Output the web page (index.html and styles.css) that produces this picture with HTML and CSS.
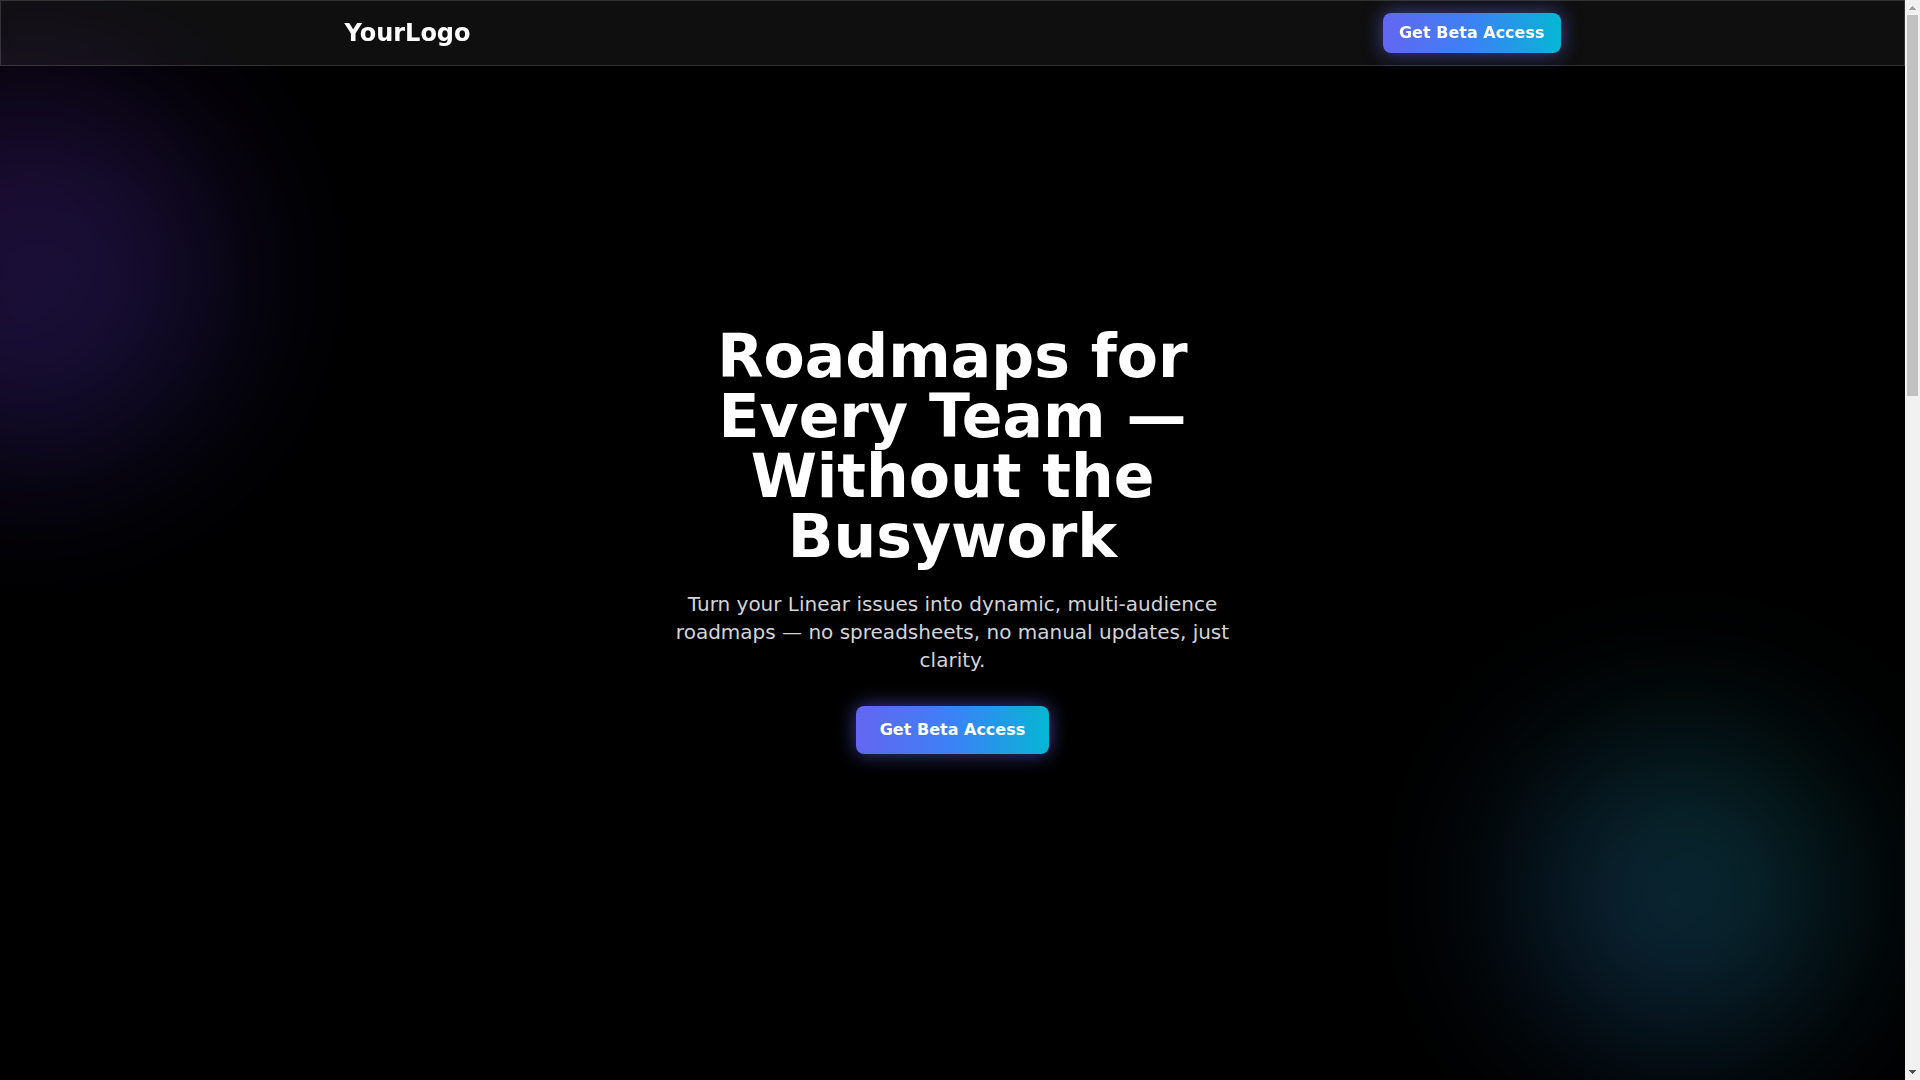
FILE: index.html
```html
<!DOCTYPE html>
<html lang="en">
<head>
  <meta charset="UTF-8" />
  <meta name="viewport" content="width=device-width, initial-scale=1.0"/>
  <title>YourLogo</title>
  <link rel="stylesheet" href="styles.css">
</head>
<body>
  <div class="page">
    <nav class="navbar">
      <div class="container">
        <a class="logo" href="#">YourLogo</a>
        <button class="btn">Get Beta Access</button>
      </div>
    </nav>

    <main class="hero">
      <div class="glow glow-left"></div>
      <div class="glow glow-right"></div>
      <div class="hero-content">
        <h1>Roadmaps for Every Team — Without the Busywork</h1>
        <p>Turn your Linear issues into dynamic, multi-audience roadmaps — no spreadsheets, no manual updates, just clarity.</p>
        <button class="btn btn-large">Get Beta Access</button>
      </div>
    </main>
  </div>

  <div class="scrollbar" aria-hidden="true">
    <svg class="arrow" viewBox="0 0 15 15" fill="#a0a0a0"><path d="M7 6h1v1h1v1h1v1h1v1H4V9h1V8h1V7h1z"/></svg>
    <div class="track"><div class="thumb"></div></div>
    <svg class="arrow" viewBox="0 0 15 15" fill="#505050"><path d="M4 5h7v1h-1v1H9v1H8v1H7V8H6V7H5V6H4z"/></svg>
  </div>
</body>
</html>
```
FILE: styles.css
```css
* { box-sizing: border-box; }
body {
  display: flex;
  margin: 0;
  font-family: "DejaVu Sans", sans-serif;
  background-color: #000;
  color: #fff;
}
.page {
  position: relative;
  flex: 1;
  min-width: 0;
}
.navbar {
  position: absolute;
  top: 0;
  left: 0;
  right: 0;
  z-index: 50;
  background-color: rgba(255, 255, 255, 0.06);
  border: 1px solid rgba(255, 255, 255, 0.15);
  backdrop-filter: blur(12px);
}
.container {
  display: flex;
  align-items: center;
  justify-content: space-between;
  max-width: 1280px;
  margin: 0 auto;
  padding: 12px 32px;
}
.logo {
  font-size: 24px;
  line-height: 32px;
  font-weight: bold;
  color: #fff;
  text-decoration: none;
}
.btn {
  padding: 8px 16px;
  border: none;
  border-radius: 8px;
  background: linear-gradient(to right, #6366f1, #3b82f6, #06b6d4);
  box-shadow: 0 0 20px rgba(99, 102, 241, 0.6);
  color: #fff;
  font-family: inherit;
  font-size: 16px;
  line-height: 24px;
  font-weight: bold;
  cursor: pointer;
}
.btn-large {
  padding: 12px 24px;
}
.hero {
  position: relative;
  display: flex;
  align-items: center;
  justify-content: center;
  min-height: 100vh;
  overflow: hidden;
}
.hero-content {
  position: relative;
  max-width: 576px;
  text-align: center;
}
.hero h1 {
  margin: 0 0 24px;
  font-size: 60px;
  line-height: 60px;
  font-weight: bold;
}
.hero p {
  margin: 0 0 32px;
  font-size: 20px;
  line-height: 28px;
  color: #d4d4d8;
}
.glow {
  position: absolute;
  border-radius: 50%;
  filter: blur(80px);
}
.glow-left {
  top: 84px;
  left: -160px;
  width: 384px;
  height: 384px;
  background: linear-gradient(to bottom right, #9333ea, #4f46e5);
  opacity: 0.24;
}
.glow-right {
  right: 64px;
  bottom: 28px;
  width: 320px;
  height: 320px;
  background: linear-gradient(to bottom left, #14b8a6, #3b82f6);
  opacity: 0.25;
}
.scrollbar {
  display: flex;
  flex-direction: column;
  width: 15px;
  height: 100vh;
  background-color: #f1f1f1;
}
.arrow {
  display: block;
  width: 15px;
  height: 15px;
  shape-rendering: crispEdges;
}
.track {
  flex: 1;
  padding: 0 2px;
}
.thumb {
  height: 36.3%;
  background-color: #c1c1c1;
}
```
